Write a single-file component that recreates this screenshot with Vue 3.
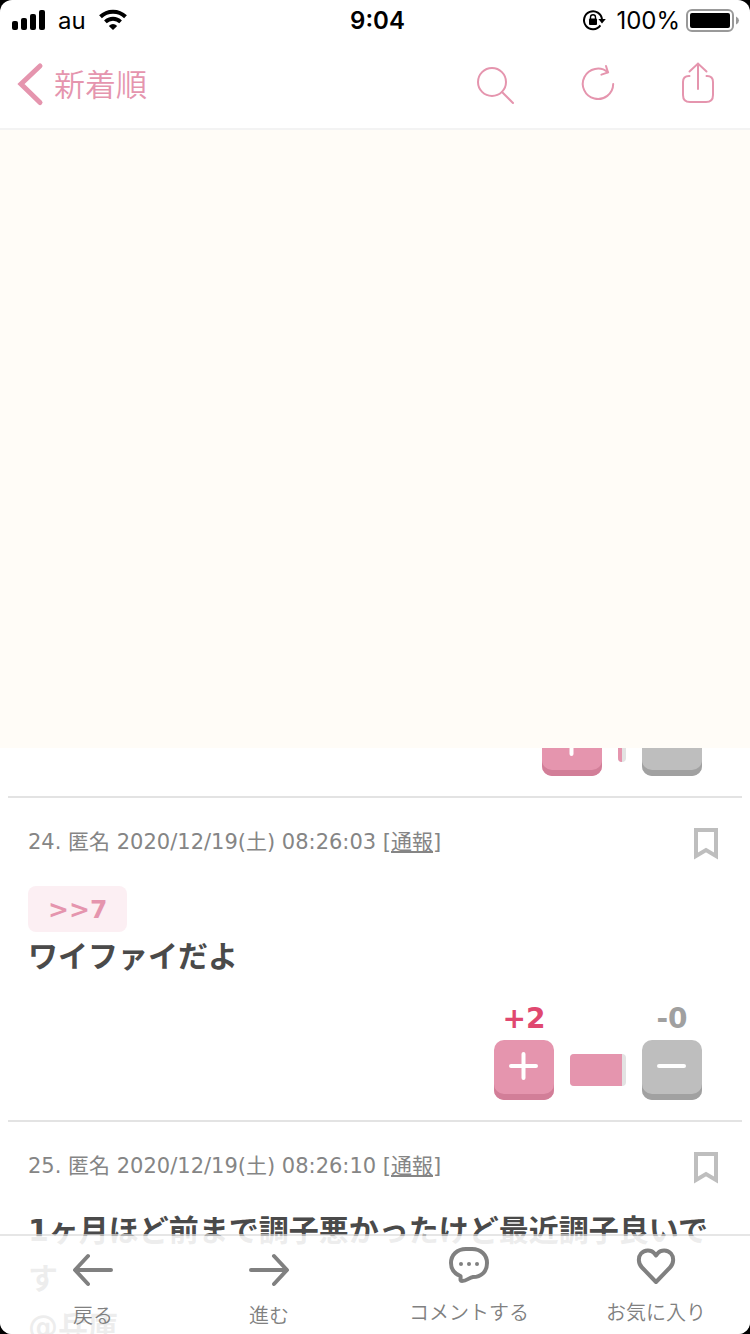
<script setup>
const posts = [
  {
    id: 24,
    time: '2020/12/19(土) 08:26:03',
    quote: '>>7',
    lines: ['ワイファイだよ'],
    plus: 2,
    minus: 0,
  },
  {
    id: 25,
    time: '2020/12/19(土) 08:26:10',
    quote: '',
    lines: ['1ヶ月ほど前まで調子悪かったけど最近調子良いです', '@兵庫'],
  },
]
</script>

<template>
  <div class="screen">
    <header class="top">
      <div class="status">
        <div class="status-side">
          <svg class="signal" viewBox="0 0 33 20" aria-hidden="true">
            <rect x="0" y="11" width="6" height="9" rx="2" />
            <rect x="9" y="8" width="6" height="12" rx="2" />
            <rect x="18" y="4" width="6" height="16" rx="2" />
            <rect x="27" y="0" width="6" height="20" rx="2" />
          </svg>
          <span>au</span>
          <svg class="wifi" viewBox="0 0 28 20" aria-hidden="true">
            <path d="M1.5 6.8 A18 18 0 0 1 26.5 6.8" fill="none" stroke="#000" stroke-width="4" />
            <path d="M6.4 11.8 A11 11 0 0 1 21.6 11.8" fill="none" stroke="#000" stroke-width="3.8" />
            <path d="M9.8 16 Q14 12 18.2 16 L14 20 Z" />
          </svg>
        </div>
        <span class="clock">9:04</span>
        <div class="status-side end">
          <svg class="lock" viewBox="0 0 23 20" aria-hidden="true">
            <path d="M17.4 15.4 A9 9 0 1 1 19 9.5" fill="none" stroke="#000" stroke-width="2" />
            <path d="M15.4 9 H22.8 L19 13.4 Z" />
            <rect x="6" y="8.5" width="8" height="6.5" rx="1" />
            <path d="M7.5 9 V7.2 A2.5 2.5 0 0 1 12.5 7.2 V9" fill="none" stroke="#000" stroke-width="1.4" />
          </svg>
          <span>100%</span>
          <svg class="battery" viewBox="0 0 53 23" aria-hidden="true">
            <rect x="1" y="1" width="46" height="21" rx="5" fill="none" stroke="#999" stroke-width="2" />
            <rect x="4" y="4" width="40" height="15" rx="2" />
            <path d="M50 7.5 Q53 9 53 11.5 Q53 14 50 15.5 Z" fill="#999" />
          </svg>
        </div>
      </div>
      <nav class="bar">
        <button type="button" class="back">
          <svg viewBox="0 0 26 42" aria-hidden="true">
            <path d="M23 3 L4 21 L23 39.5" />
          </svg>
          <span>新着順</span>
        </button>
        <div class="tools">
          <button type="button" aria-label="検索">
            <svg viewBox="0 0 40 40" aria-hidden="true">
              <circle cx="14" cy="18" r="14" />
              <path d="M24 28 L35 39" />
            </svg>
          </button>
          <button type="button" aria-label="更新">
            <svg viewBox="0 0 40 40" aria-hidden="true">
              <path d="M35.2 20 A15.2 15.2 0 1 1 29.8 8.2" />
              <path d="M28 2 L30 8.4 L23.4 10.6" />
            </svg>
          </button>
          <button type="button" aria-label="共有">
            <svg viewBox="0 0 40 40" aria-hidden="true">
              <path d="M11.5 12 H11 Q5 12 5 18 V31 Q5 38 12 38 H28 Q35 38 35 31 V18 Q35 12 29 12 H28.5" />
              <path d="M20 25 V0 M11.5 7.5 L20 -0.5 L28.5 7.5" />
            </svg>
          </button>
        </div>
      </nav>
    </header>

    <main>
      <div class="blank"></div>

      <section class="cut">
        <div class="votes">
          <button type="button" class="vote plus" aria-label="プラス">
            <svg viewBox="0 0 60 60" aria-hidden="true"><path d="M17 26 H42 M29.5 14 V38" /></svg>
          </button>
          <div class="meter"><i class="meter-min"></i></div>
          <button type="button" class="vote minus" aria-label="マイナス">
            <svg viewBox="0 0 60 60" aria-hidden="true"><path d="M17 26 H42" /></svg>
          </button>
        </div>
      </section>

      <article v-for="post in posts" :key="post.id" class="post">
        <div class="head">
          <p class="meta">{{ post.id }}. 匿名 {{ post.time }} [<a href="#">通報</a>]</p>
          <button type="button" class="mark" aria-label="ブックマーク">
            <svg viewBox="0 0 24 32" aria-hidden="true">
              <path d="M2 2 H22 V28 L12 22 L2 28 Z" />
            </svg>
          </button>
        </div>
        <div class="body">
          <a v-if="post.quote" href="#" class="quote">{{ post.quote }}</a>
          <p v-for="line in post.lines" :key="line">{{ line }}</p>
        </div>
        <div v-if="'plus' in post" class="votes">
          <div class="choice">
            <span class="count up">+{{ post.plus }}</span>
            <button type="button" class="vote plus" aria-label="プラス">
              <svg viewBox="0 0 60 60" aria-hidden="true"><path d="M17 26 H42 M29.5 14 V38" /></svg>
            </button>
          </div>
          <div class="meter"><i class="meter-full"></i></div>
          <div class="choice">
            <span class="count">-{{ post.minus }}</span>
            <button type="button" class="vote minus" aria-label="マイナス">
              <svg viewBox="0 0 60 60" aria-hidden="true"><path d="M17 26 H42" /></svg>
            </button>
          </div>
        </div>
      </article>
    </main>

    <footer class="dock">
      <button type="button" class="low">
        <svg viewBox="0 0 40 36" aria-hidden="true"><path d="M38 18 H3 M15 4 L2 18 L15 32" /></svg>
        <span>戻る</span>
      </button>
      <button type="button" class="low">
        <svg viewBox="0 0 40 36" aria-hidden="true"><path d="M2 18 H37 M25 4 L38 18 L25 32" /></svg>
        <span>進む</span>
      </button>
      <button type="button">
        <svg viewBox="0 0 40 36" aria-hidden="true">
          <path d="M17 2 H23 C32 2 38 8 38 16 C38 25 32 30 24 30 C20 30.5 18 34 13 34 C10.5 34 12 31 11.5 29 C5 26.5 2 22 2 16 C2 8 8 2 17 2 Z" />
          <circle class="dot" cx="12" cy="17" r="2" />
          <circle class="dot" cx="20" cy="17" r="2" />
          <circle class="dot" cx="28" cy="17" r="2" />
        </svg>
        <span>コメントする</span>
      </button>
      <button type="button">
        <svg viewBox="0 0 40 36" aria-hidden="true">
          <path d="M20 35 L6 20.5 C2 16.5 2 10 5 6.500 C8.5 2.5 15 2.5 18 6 L20 8.5 L22 6 C25 2.5 31.5 2.5 35 6.5 C38 10 38 16.5 34 20.5 Z" />
        </svg>
        <span>お気に入り</span>
      </button>
    </footer>
  </div>
</template>

<style>
html,
body {
  background: #000;
}
</style>

<style scoped>
.screen {
  height: 100vh;
  overflow: hidden;
  position: relative;
  background: #fff;
  border-radius: 12px;
  font-family: "DejaVu Sans", "Noto Sans CJK JP", sans-serif;
  color: #4a4a4a;
}
button {
  margin: 0;
  padding: 0;
  border: 0;
  background: none;
  font: inherit;
  color: inherit;
}
svg {
  display: block;
  overflow: visible;
}
p {
  margin: 0;
}

.top {
  border-bottom: 2px solid #f3f3f3;
}
.status {
  display: grid;
  grid-template-columns: 1fr auto 1fr;
  align-items: center;
  height: 40px;
  padding: 0 11px 0 12px;
  font-family: Inter, sans-serif;
  font-size: 24px;
  color: #000;
}
.status-side {
  display: flex;
  align-items: center;
  gap: 13px;
}
.end {
  justify-content: flex-end;
  gap: 6px;
}
.end .lock {
  margin-right: 4px;
}
.clock {
  padding-left: 4px;
  font-weight: 600;
}
.signal {
  width: 33px;
  height: 20px;
}
.wifi {
  width: 28px;
  height: 20px;
}
.lock {
  width: 23px;
  height: 20px;
}
.battery {
  width: 53px;
  height: 23px;
}

.bar {
  display: flex;
  align-items: center;
  justify-content: space-between;
  height: 88px;
  padding: 0 32px 0 17px;
  color: #e595ae;
}
.bar svg {
  fill: none;
  stroke: #e595ae;
  stroke-width: 2;
  stroke-linecap: round;
}
.back {
  display: flex;
  align-items: center;
  gap: 11px;
  font-family: "Noto Sans CJK JP", sans-serif;
  font-size: 31px;
  font-weight: 350;
  line-height: 40px;
}
.back span {
  padding-bottom: 2px;
}
.back svg {
  width: 26px;
  height: 42px;
  stroke-width: 5;
}
.tools {
  display: flex;
  gap: 60px;
}
.tools svg {
  width: 40px;
  height: 40px;
}

.blank {
  height: 618px;
  background: #fffcf7;
}
.cut {
  display: flex;
  flex-direction: column;
  justify-content: flex-end;
  height: 48px;
  margin: 0 8px;
  overflow: hidden;
}

.post {
  margin: 0 8px;
  padding-top: 30px;
  border-top: 2px solid #e3e3e3;
}
.head {
  display: flex;
  justify-content: space-between;
  height: 32px;
  padding: 0 24px 0 20px;
}
.meta {
  font-size: 21px;
  line-height: 28px;
  color: #858585;
}
.meta a {
  color: inherit;
}
.mark svg {
  width: 24px;
  height: 32px;
  fill: none;
  stroke: #bebebe;
  stroke-width: 4;
}
.body {
  padding: 23px 14px 0 20px;
  font-size: 30px;
  font-weight: 700;
  line-height: 48px;
}
.quote {
  display: block;
  width: fit-content;
  margin: 3px 0 1px;
  padding: 1px 20px 0;
  border-radius: 8px;
  background: #fceff3;
  color: #e595ae;
  font-size: 25px;
  line-height: 45px;
  text-decoration: none;
}

.votes {
  display: flex;
  justify-content: flex-end;
  align-items: flex-end;
  gap: 16px;
  padding: 22px 40px 20px 0;
}
.choice {
  display: flex;
  flex-direction: column;
  align-items: center;
  gap: 5px;
}
.count {
  font-size: 28px;
  font-weight: 700;
  line-height: 32px;
  color: #a0a0a0;
}
.up {
  color: #e04870;
}
.vote {
  width: 60px;
  height: 60px;
  border-radius: 10px;
}
.vote svg {
  fill: none;
  stroke: #fff;
  stroke-width: 4;
  stroke-linecap: round;
}
.plus {
  background: #e595ae;
  box-shadow: inset 0 -6px #d27e98;
}
.minus {
  background: #bebebe;
  box-shadow: inset 0 -6px #a1a1a1;
}
.meter {
  display: flex;
  height: 32px;
  margin-bottom: 14px;
  padding-right: 4px;
  border-radius: 4px;
  background: #e3e3e3;
  overflow: hidden;
}
.meter i {
  background: #e595ae;
}
.meter-min {
  width: 4px;
}
.meter-full {
  width: 52px;
}

.dock {
  position: absolute;
  left: 0;
  right: 0;
  bottom: 0;
  display: grid;
  grid-template-columns: 186fr 166fr 234fr 140fr;
  align-items: start;
  height: 98px;
  padding-right: 24px;
  border-top: 2px solid rgba(220, 220, 220, 0.7);
  background: rgba(255, 255, 255, 0.9);
  background-clip: padding-box;
  font-family: "Noto Sans CJK JP", sans-serif;
  font-size: 20px;
  font-weight: 350;
  line-height: 28px;
  color: #808080;
}
.dock button {
  display: flex;
  flex-direction: column;
  align-items: center;
  gap: 15px;
  padding-top: 11px;
  white-space: nowrap;
}
.dock .low {
  gap: 13px;
  padding-top: 16px;
}
.dock svg {
  width: 40px;
  height: 36px;
  fill: none;
  stroke: #808080;
  stroke-width: 4;
  stroke-linecap: round;
  stroke-linejoin: round;
}
.dock .dot {
  fill: #808080;
  stroke: none;
}
</style>
